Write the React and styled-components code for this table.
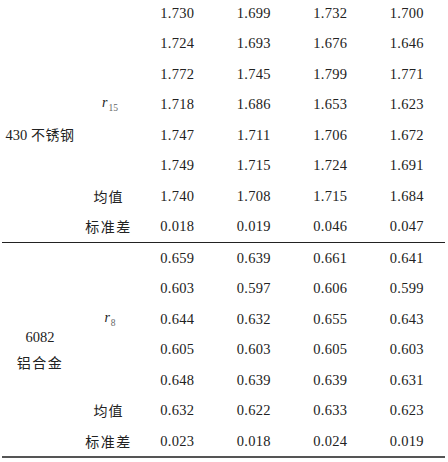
import React from 'react'
import styled, { createGlobalStyle } from 'styled-components'

const GlobalStyle = createGlobalStyle`
  html, body {
    margin: 0;
    padding: 0;
    background: #fff;
  }
`

const Page = styled.div`
  width: 448px;
  height: 462px;
  overflow: hidden;
  background: #fff;
  color: #222;
  font-family: "Liberation Serif", "Noto Sans CJK SC", serif;
  font-size: 14.5px;
`

const Table = styled.div`
  margin-top: -2.5px;
  margin-left: 2px;
  width: 443px;
`

const Block = styled.div`
  display: grid;
  grid-template-columns: 76px 61px repeat(4, 76.5px);
  grid-auto-rows: 30.5px;
  border-bottom: ${(p) => p.$rule};
`

const Cell = styled.div`
  grid-row: ${(p) => p.$row};
  grid-column: ${(p) => p.$col};
  display: flex;
  flex-direction: column;
  align-items: center;
  justify-content: center;
  white-space: nowrap;
  line-height: 1;
`

const Num = styled(Cell)`
  letter-spacing: 0.3px;
`

const Zh = styled.span`
  font-family: "Noto Sans CJK SC", sans-serif;
  font-size: 14px;
  letter-spacing: ${(p) => p.$spacing || '1px'};
`

const Material = styled(Cell)`
  gap: 11px;
`

const Sym = styled.span`
  font-style: italic;
  font-size: 14px;
  margin-left: 3px;
`

const Sub = styled.sub`
  font-size: 9.5px;
  font-style: normal;
  color: #666;
  vertical-align: -4px;
  margin-left: 1px;
`

const steel = [
  ['1.730', '1.699', '1.732', '1.700'],
  ['1.724', '1.693', '1.676', '1.646'],
  ['1.772', '1.745', '1.799', '1.771'],
  ['1.718', '1.686', '1.653', '1.623'],
  ['1.747', '1.711', '1.706', '1.672'],
  ['1.749', '1.715', '1.724', '1.691'],
  ['1.740', '1.708', '1.715', '1.684'],
  ['0.018', '0.019', '0.046', '0.047'],
]

const alu = [
  ['0.659', '0.639', '0.661', '0.641'],
  ['0.603', '0.597', '0.606', '0.599'],
  ['0.644', '0.632', '0.655', '0.643'],
  ['0.605', '0.603', '0.605', '0.603'],
  ['0.648', '0.639', '0.639', '0.631'],
  ['0.632', '0.622', '0.633', '0.623'],
  ['0.023', '0.018', '0.024', '0.019'],
]

function Values({ rows }) {
  return rows.map((row, r) =>
    row.map((v, c) => (
      <Num key={r + '-' + c} $row={r + 1} $col={c + 3}>
        {v}
      </Num>
    ))
  )
}

export default function App() {
  return (
    <Page>
      <GlobalStyle />
      <Table>
        <Block $rule="1px solid #222">
          <Cell $row={5} $col={1}>
            <span>
              430 <Zh $spacing="0.5px">不锈钢</Zh>
            </span>
          </Cell>
          <Cell $row={4} $col={2}>
            <span>
              <Sym>r</Sym>
              <Sub>15</Sub>
            </span>
          </Cell>
          <Cell $row={7} $col={2}>
            <Zh>均值</Zh>
          </Cell>
          <Cell $row={8} $col={2}>
            <Zh $spacing="1.5px">标准差</Zh>
          </Cell>
          <Values rows={steel} />
        </Block>
        <Block $rule="2px solid #555">
          <Material $row="3 / 6" $col={1}>
            <span>6082</span>
            <Zh $spacing="1.5px">铝合金</Zh>
          </Material>
          <Cell $row={3} $col={2}>
            <span>
              <Sym>r</Sym>
              <Sub>8</Sub>
            </span>
          </Cell>
          <Cell $row={6} $col={2}>
            <Zh>均值</Zh>
          </Cell>
          <Cell $row={7} $col={2}>
            <Zh $spacing="1.5px">标准差</Zh>
          </Cell>
          <Values rows={alu} />
        </Block>
      </Table>
    </Page>
  )
}
